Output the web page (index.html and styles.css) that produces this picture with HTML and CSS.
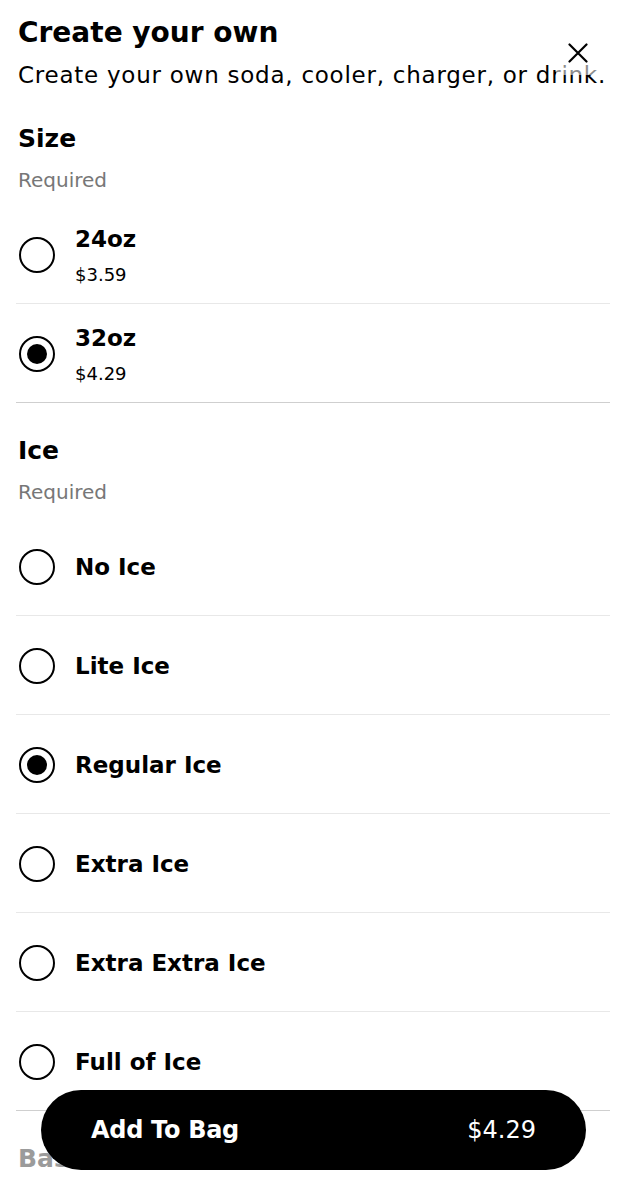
FILE: index.html
```html
<!DOCTYPE html>
<html lang="en">
<head>
<meta charset="utf-8">
<title>Create your own</title>
<link rel="stylesheet" href="styles.css">
</head>
<body>
<div class="sheet">
  <header class="head">
    <h1 class="title">Create your own</h1>
    <p class="subtitle">Create your own soda, cooler, charger, or drink.</p>
    <button class="close" aria-label="Close">
      <svg width="20" height="20" viewBox="0 0 20 20"><path d="M1.5 1.5 L18.5 18.5 M18.5 1.5 L1.5 18.5" stroke="#000" stroke-width="2.2" stroke-linecap="round" fill="none"/></svg>
    </button>
  </header>

  <section class="group">
    <h2 class="group-title">Size</h2>
    <div class="group-note">Required</div>
    <ul class="options">
      <li class="option"><span class="radio"></span><span class="opt-text"><span class="opt-name">24oz</span><span class="opt-price">$3.59</span></span></li>
      <li class="option"><span class="radio on"></span><span class="opt-text"><span class="opt-name">32oz</span><span class="opt-price">$4.29</span></span></li>
    </ul>
  </section>

  <section class="group">
    <h2 class="group-title">Ice</h2>
    <div class="group-note">Required</div>
    <ul class="options">
      <li class="option"><span class="radio"></span><span class="opt-name">No Ice</span></li>
      <li class="option"><span class="radio"></span><span class="opt-name">Lite Ice</span></li>
      <li class="option"><span class="radio on"></span><span class="opt-name">Regular Ice</span></li>
      <li class="option"><span class="radio"></span><span class="opt-name">Extra Ice</span></li>
      <li class="option"><span class="radio"></span><span class="opt-name">Extra Extra Ice</span></li>
      <li class="option"><span class="radio"></span><span class="opt-name">Full of Ice</span></li>
    </ul>
  </section>

  <section class="group">
    <h2 class="group-title faded">Base</h2>
  </section>
</div>

<button class="bag"><span class="bag-label">Add To Bag</span><span class="bag-price">$4.29</span></button>
</body>
</html>
```

FILE: styles.css
```css
* { box-sizing: border-box; }
html, body { margin: 0; padding: 0; }
body {
  background: #fff;
  color: #000;
  font-family: "DejaVu Sans", "Inter", sans-serif;
  width: 628px;
  height: 1178px;
  overflow: hidden;
  position: relative;
}
.sheet {
  padding: 14px 18px 0 16px;
}
.head { position: relative; }
.title {
  margin: 0 0 0 2px;
  font-size: 28px;
  font-weight: 700;
  line-height: 38px;
}
.subtitle {
  margin: 8px 0 0 2px;
  font-size: 23px;
  font-weight: 400;
  line-height: 30px;
  letter-spacing: 0.75px;
  white-space: nowrap;
}
.close {
  position: absolute;
  top: 17px;
  right: 10px;
  width: 44px;
  height: 44px;
  border: 0;
  padding: 0;
  background: rgba(255,255,255,0.55);
  display: flex;
  align-items: center;
  justify-content: center;
}
.group { padding-top: 33px; }
.group + .group { padding-top: 32px; }
.group-title {
  margin: 0 0 0 2px;
  font-size: 25px;
  font-weight: 700;
  line-height: 32px;
}
.group-title.faded { color: #9b9b9b; }
.group-note {
  margin: 12px 0 0 2px;
  font-size: 20px;
  line-height: 26px;
  color: #777;
}
.options {
  list-style: none;
  margin: 12px 0 0;
  padding: 0;
}
.option {
  height: 99px;
  display: flex;
  align-items: center;
  gap: 20px;
  padding: 2px 0 0 3px;
  border-bottom: 1px solid #e8e8e8;
}
.options .option:last-child { border-bottom-color: #cfcfcf; }
.radio {
  flex: none;
  width: 36px;
  height: 36px;
  border: 2.5px solid #000;
  border-radius: 50%;
  display: flex;
  align-items: center;
  justify-content: center;
}
.radio.on::after {
  content: "";
  width: 20px;
  height: 20px;
  border-radius: 50%;
  background: #000;
}
.opt-text { display: flex; flex-direction: column; }
.opt-name {
  font-size: 23px;
  font-weight: 700;
  line-height: 30px;
}
.opt-price {
  margin-top: 9px;
  font-size: 18px;
  line-height: 24px;
}
.bag {
  position: absolute;
  left: 41px;
  top: 1090px;
  width: 545px;
  height: 80px;
  border: 0;
  border-radius: 40px;
  background: #000;
  color: #fff;
  display: flex;
  align-items: center;
  justify-content: space-between;
  padding: 0 50px 0 50px;
  font-family: inherit;
}
.bag-label { font-size: 24px; font-weight: 700; letter-spacing: -0.3px; }
.bag-price { font-size: 24px; font-weight: 400; }
```
